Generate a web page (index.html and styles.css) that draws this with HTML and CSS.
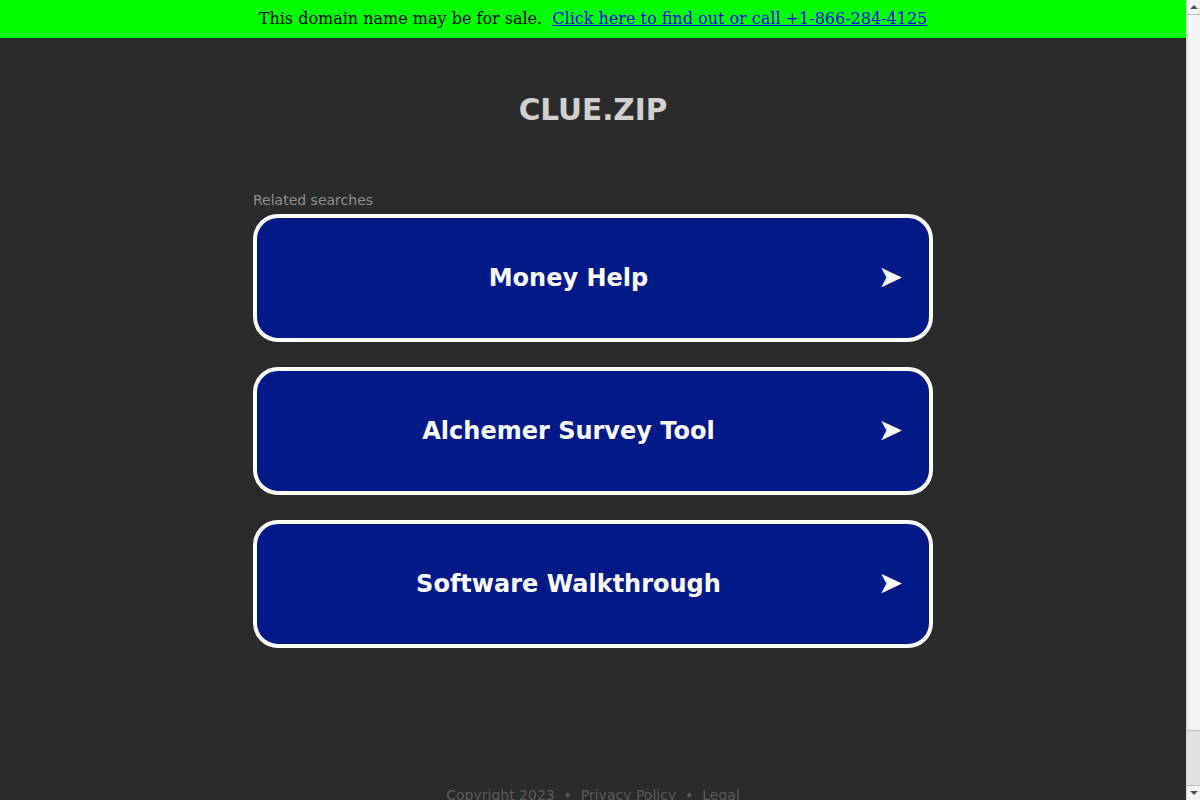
FILE: index.html
```html
<!DOCTYPE html>
<html lang="en">
<head>
<meta charset="utf-8">
<title>clue.zip</title>
<link rel="stylesheet" href="styles.css">
</head>
<body>
<div class="banner">This domain name may be for sale.&nbsp; <a href="#">Click here to find out or call +1-866-284-4125</a></div>
<main class="content">
  <h1 class="title">CLUE.ZIP</h1>
  <div class="related">Related searches</div>
  <ul class="links">
    <li><a class="link-box" href="#"><span class="label">Money Help</span><span class="arrow">➤</span></a></li>
    <li><a class="link-box" href="#"><span class="label">Alchemer Survey Tool</span><span class="arrow">➤</span></a></li>
    <li><a class="link-box" href="#"><span class="label">Software Walkthrough</span><span class="arrow">➤</span></a></li>
  </ul>
</main>
<footer class="footer">Copyright 2023 &nbsp;•&nbsp; <a href="#">Privacy Policy</a> &nbsp;•&nbsp; <a href="#">Legal</a></footer>
<div class="fake-scrollbar" aria-hidden="true">
  <div class="sb-btn"><span class="tri-up"></span></div>
  <div class="sb-track"><div class="sb-thumb"></div></div>
  <div class="sb-btn"><span class="tri-down"></span></div>
</div>
</body>
</html>
```
FILE: styles.css
```css
html, body {
  margin: 0;
  padding: 0;
}
html {
  overflow: hidden;
}
body {
  background: #2b2b2b;
  font-family: "DejaVu Sans", sans-serif;
  margin-right: 14px;
  min-height: 860px;
}
.banner {
  background: #00ff00;
  height: 38px;
  line-height: 38px;
  text-align: center;
  font-family: "DejaVu Serif", serif;
  font-size: 16px;
  color: #000;
}
.banner a {
  color: #0000ee;
  text-decoration: underline;
}
.content {
  width: 680px;
  margin: 0 auto;
}
.title {
  margin: 54px 0 0;
  font-size: 29.5px;
  line-height: 36px;
  font-weight: bold;
  color: #d0d0d0;
  text-align: center;
}
.related {
  margin-top: 64px;
  font-size: 14px;
  line-height: 17px;
  color: #8f8f8f;
}
.links {
  list-style: none;
  margin: 5px 0 0;
  padding: 0;
  display: flex;
  flex-direction: column;
  gap: 25px;
}
.link-box {
  display: flex;
  align-items: center;
  height: 120px;
  border: 4px solid #ffffff;
  border-radius: 25px;
  background: #021a88;
  color: #ffffff;
  text-decoration: none;
  padding-left: 2px;
  padding-right: 27px;
}
.label {
  flex: 1;
  text-align: center;
  font-size: 24px;
  font-weight: bold;
}
.arrow {
  font-size: 30px;
  width: 22px;
  text-align: center;
  line-height: 1;
  margin-right: 2px;
  margin-bottom: 3px;
}
.footer {
  margin-top: 139px;
  text-align: center;
  font-size: 14px;
  line-height: 17px;
  color: #5a5a5a;
}
.footer a {
  color: #5a5a5a;
  text-decoration: none;
}
.fake-scrollbar {
  position: fixed;
  top: 0;
  right: 0;
  width: 14px;
  height: 100vh;
  display: flex;
  flex-direction: column;
  background: linear-gradient(to right, #e8e8e8, #f7f7f7 30%, #f2f2f2);
  border-left: 1px solid #d6d6d6;
  box-sizing: border-box;
}
.sb-btn {
  height: 14px;
  display: flex;
  align-items: center;
  justify-content: center;
  background: #f4f4f4;
}
.sb-btn:first-child {
  border-bottom: 1px solid #bcbcbc;
}
.tri-up, .tri-down {
  width: 0;
  height: 0;
  border-left: 4px solid transparent;
  border-right: 4px solid transparent;
}
.tri-up {
  border-bottom: 4px solid #505050;
}
.tri-down {
  border-top: 4px solid #505050;
}
.sb-track {
  flex: 1;
  display: flex;
  flex-direction: column;
  justify-content: flex-end;
}
.sb-thumb {
  height: 54px;
  background: #e2e2e2;
  border-top: 1px solid #bdbdbd;
  border-bottom: 1px solid #bdbdbd;
}
```
